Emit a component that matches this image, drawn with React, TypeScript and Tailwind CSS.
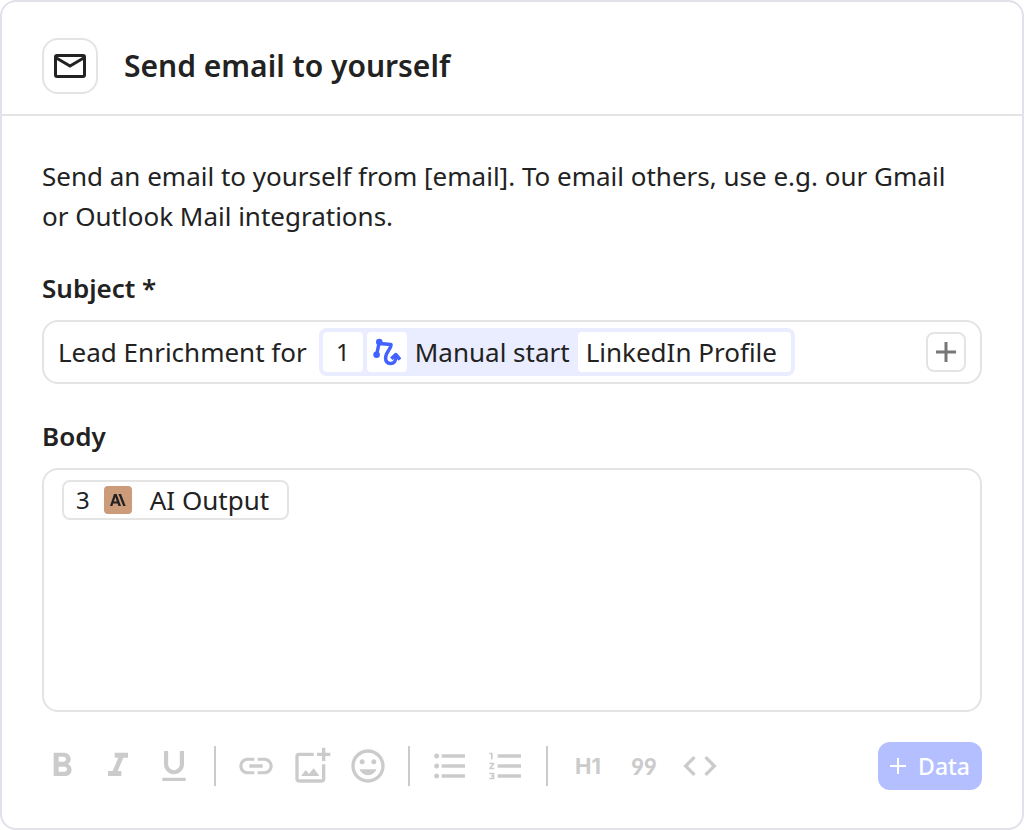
import React from 'react';
import {
  MdCode,
  MdFormatBold,
  MdFormatItalic,
  MdFormatListBulleted,
  MdFormatListNumbered,
  MdFormatUnderlined,
  MdInsertEmoticon,
  MdLink,
  MdOutlineAddPhotoAlternate,
} from 'react-icons/md';

interface ToolButtonProps {
  label: string;
  children: React.ReactNode;
}

const ToolButton: React.FC<ToolButtonProps> = ({ label, children }) => (
  <button
    type="button"
    aria-label={label}
    className="flex h-10 w-10 shrink-0 items-center justify-center text-[#cbcbcb]"
  >
    {children}
  </button>
);

const Divider: React.FC = () => <div className="mx-1 h-10 w-0.5 shrink-0 bg-[#cbcbcb]" />;

const MailIcon: React.FC = () => (
  <svg width="32" height="24" viewBox="0 0 32 24" fill="none" stroke="currentColor" strokeWidth="3">
    <rect x="1.5" y="1.5" width="29" height="21" rx="1.5" />
    <path d="M1.5 3.5 16 12l14.500-8.500" />
  </svg>
);

const RouteIcon: React.FC = () => (
  <svg
    width="28"
    height="28"
    viewBox="0 0 28 28"
    fill="none"
    stroke="currentColor"
    strokeWidth="3.5"
    strokeLinejoin="round"
  >
    <circle cx="6.300" cy="4" r="3.300" fill="currentColor" stroke="none" />
    <circle cx="3.600" cy="16.800" r="3.300" fill="currentColor" stroke="none" />
    <path d="M6.300 4 3.600 16.800M6.300 5.500 18 6.500C18.500 10.500 12.600 14 12.600 20c0 3.500 2 5.500 5 5.500 3.800 0 5.600-3 5.400-8" />
    <path d="M18.300 20.800 22.800 16.500l4.200 5" />
  </svg>
);

const AnthropicIcon: React.FC = () => (
  <span className="flex h-7 w-7 shrink-0 items-center justify-center rounded bg-[#cc9b7a]">
    <svg width="16" height="12" viewBox="0 0 16 12" fill="#222222">
      <path
        fillRule="evenodd"
        d="M4 0h2.700L11 12H8.500l-.9-2.500H3.200L2.400 12H0zM5.400 3 3.900 7.500h2.900z"
      />
      <path d="M8.500 0H11l4.700 12h-2.500z" />
    </svg>
  </span>
);

export default function App() {
  return (
    <main className="min-h-screen rounded-2xl border-2 border-[#e2e1e9] bg-white font-['Noto_Sans',sans-serif] text-[26px] text-[#222222]">
      <header className="flex items-center gap-[26px] border-b-2 border-[#e4e4e4] px-10 pt-9 pb-5">
        <div className="flex h-14 w-14 shrink-0 items-center justify-center rounded-2xl border-2 border-[#e4e4e4]">
          <MailIcon />
        </div>
        <h1 className="text-[30px] leading-10 font-semibold">Send email to yourself</h1>
      </header>

      <form className="px-10 pt-10 pb-9">
        <p className="pr-4 leading-10">
          Send an email to yourself from [email]. To email others, use e.g. our Gmail or Outlook Mail
          integrations.
        </p>

        <label htmlFor="subject" className="mt-8 block leading-10 font-semibold">
          Subject *
        </label>
        <div className="mt-3 flex h-16 items-center gap-3 rounded-2xl border-2 border-[#e4e4e4] px-3.5">
          <input
            id="subject"
            type="text"
            defaultValue="Lead Enrichment for"
            className="field-sizing-content min-w-0 outline-none"
          />
          <div className="flex h-12 shrink-0 items-center gap-1 rounded-lg bg-[#eaedff] p-1 leading-10">
            <span className="h-10 w-10 rounded bg-white text-center text-2xl leading-10">1</span>
            <span className="flex h-10 w-10 items-center justify-center rounded bg-white text-[#4262ff]">
              <RouteIcon />
            </span>
            <span className="px-1">Manual start</span>
            <span className="rounded bg-white pr-3.5 pl-2">LinkedIn Profile</span>
          </div>
          <button
            type="button"
            aria-label="Insert data"
            className="ml-auto flex h-10 w-10 shrink-0 items-center justify-center rounded-lg border-2 border-[#e4e4e4] text-[#777777]"
          >
            <svg width="20" height="20" viewBox="0 0 20 20" stroke="currentColor" strokeWidth="3">
              <path d="M10 0v20M0 10h20" />
            </svg>
          </button>
        </div>

        <label htmlFor="body" className="mt-8 block leading-10 font-semibold">
          Body
        </label>
        <div className="mt-3 rounded-2xl border-2 border-[#e4e4e4] px-[18px] py-2.5">
          <div className="flex h-10 w-fit items-center rounded-lg border-2 border-[#e4e4e4] pr-[18px] pl-3 leading-9">
            <span className="text-2xl">3</span>
            <span className="mr-[18px] ml-3.5">
              <AnthropicIcon />
            </span>
            <span>AI Output</span>
          </div>
          <textarea id="body" className="block h-[180px] w-full resize-none outline-none" />
        </div>

        <div className="mt-[30px] flex items-center gap-4">
          <ToolButton label="Bold">
            <MdFormatBold size={40} />
          </ToolButton>
          <ToolButton label="Italic">
            <MdFormatItalic size={40} />
          </ToolButton>
          <ToolButton label="Underline">
            <MdFormatUnderlined size={40} />
          </ToolButton>
          <Divider />
          <ToolButton label="Link">
            <MdLink size={40} />
          </ToolButton>
          <ToolButton label="Image">
            <MdOutlineAddPhotoAlternate size={40} />
          </ToolButton>
          <ToolButton label="Emoji">
            <MdInsertEmoticon size={40} />
          </ToolButton>
          <Divider />
          <ToolButton label="Bulleted list">
            <MdFormatListBulleted size={40} />
          </ToolButton>
          <ToolButton label="Numbered list">
            <MdFormatListNumbered size={40} />
          </ToolButton>
          <Divider />
          <ToolButton label="Heading">
            <span className="font-['Inter',sans-serif] text-[22px] font-bold">H1</span>
          </ToolButton>
          <ToolButton label="Quote">
            <span className="font-['Lato',sans-serif] text-[22px] font-black">99</span>
          </ToolButton>
          <ToolButton label="Code">
            <MdCode size={40} />
          </ToolButton>
          <button
            type="button"
            className="ml-auto flex h-12 shrink-0 items-center gap-3 rounded-xl bg-[#b3bfff] px-3 text-[23px] font-medium text-white"
          >
            <svg width="16" height="16" viewBox="0 0 16 16" stroke="currentColor" strokeWidth="2">
              <path d="M8 0v16M0 8h16" />
            </svg>
            Data
          </button>
        </div>
      </form>
    </main>
  );
}
